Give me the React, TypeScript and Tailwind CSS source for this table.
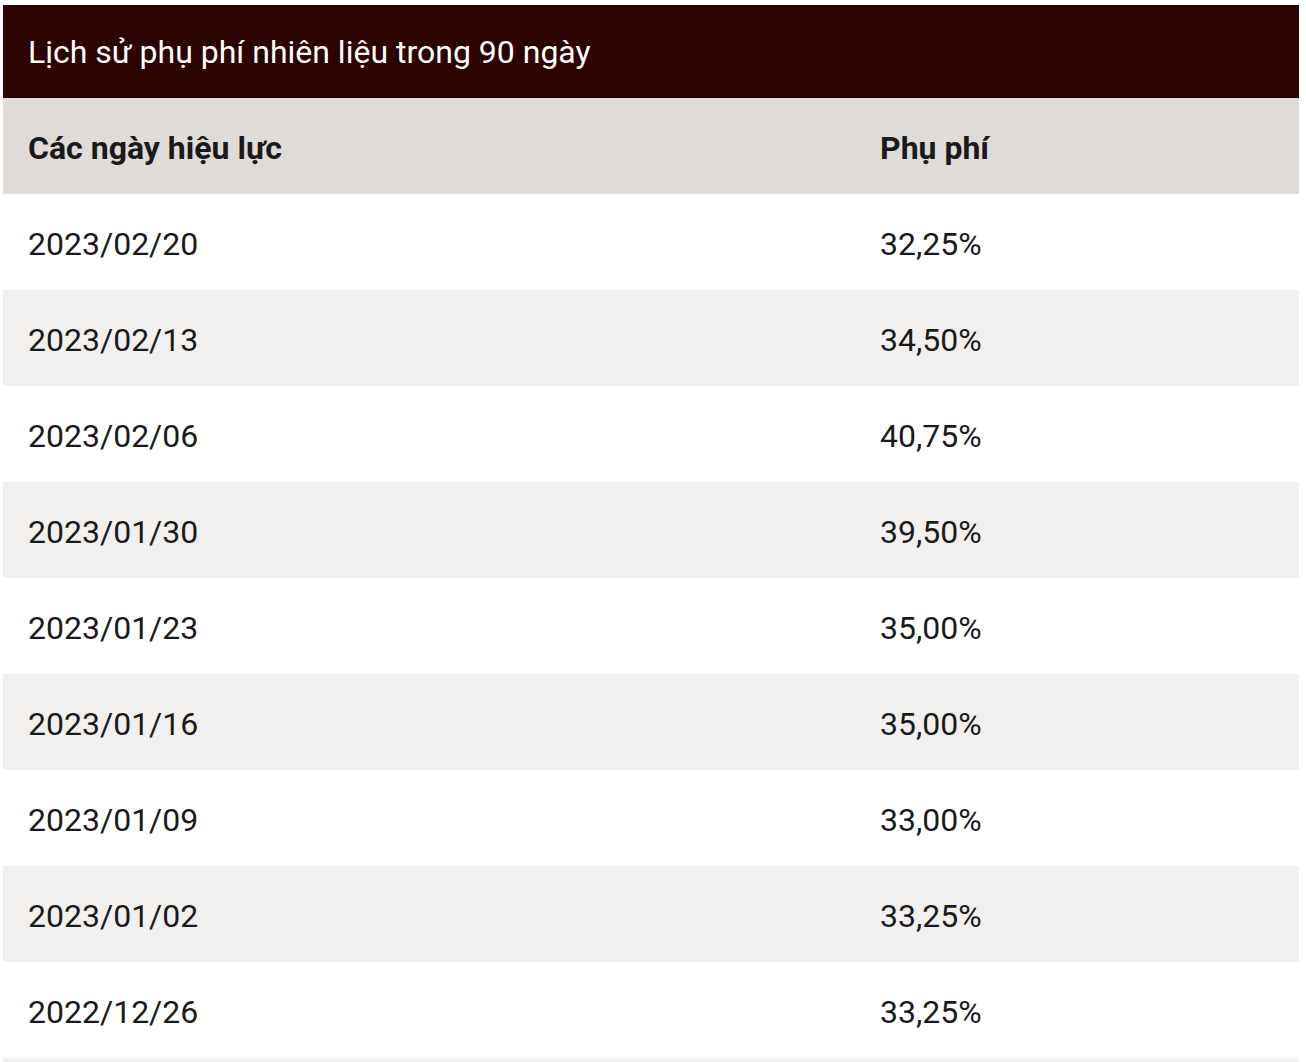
const rows = [
  { date: '2023/02/20', fee: '32,25%' },
  { date: '2023/02/13', fee: '34,50%' },
  { date: '2023/02/06', fee: '40,75%' },
  { date: '2023/01/30', fee: '39,50%' },
  { date: '2023/01/23', fee: '35,00%' },
  { date: '2023/01/16', fee: '35,00%' },
  { date: '2023/01/09', fee: '33,00%' },
  { date: '2023/01/02', fee: '33,25%' },
  { date: '2022/12/26', fee: '33,25%' },
];

export default function App() {
  return (
    <div className="min-h-screen bg-white pt-[5px] px-[3px] font-['Roboto',sans-serif] text-[#1a1a1a]">
      <div className="w-[1296px]">
        <div className="h-[93px] bg-[#2d0300] flex items-center px-[25px]">
          <h2 className="text-[32px] text-white font-normal">Lịch sử phụ phí nhiên liệu trong 90 ngày</h2>
        </div>

        <table className="w-full border-collapse">
          <thead>
            <tr className="h-[96px] bg-[#dedbd8]">
              <th className="w-[852px] text-left px-[25px] pt-[4px] text-[32px] font-bold">Các ngày hiệu lực</th>
              <th className="text-left px-[25px] pt-[4px] text-[32px] font-bold">Phụ phí</th>
            </tr>
          </thead>
          <tbody>
            {rows.map((r, i) => (
              <tr key={i} className={`h-[96px] ${i % 2 === 1 ? 'bg-[#f1f0ef]' : 'bg-white'}`}>
                <td className="px-[25px] pt-[4px] text-[32px]">{r.date}</td>
                <td className="px-[25px] pt-[4px] text-[32px]">{r.fee}</td>
              </tr>
            ))}
            {/* next row, only its top edge shows */}
            <tr className="h-[96px] bg-[#f1f0ef]">
              <td />
              <td />
            </tr>
          </tbody>
        </table>
      </div>
    </div>
  );
}
